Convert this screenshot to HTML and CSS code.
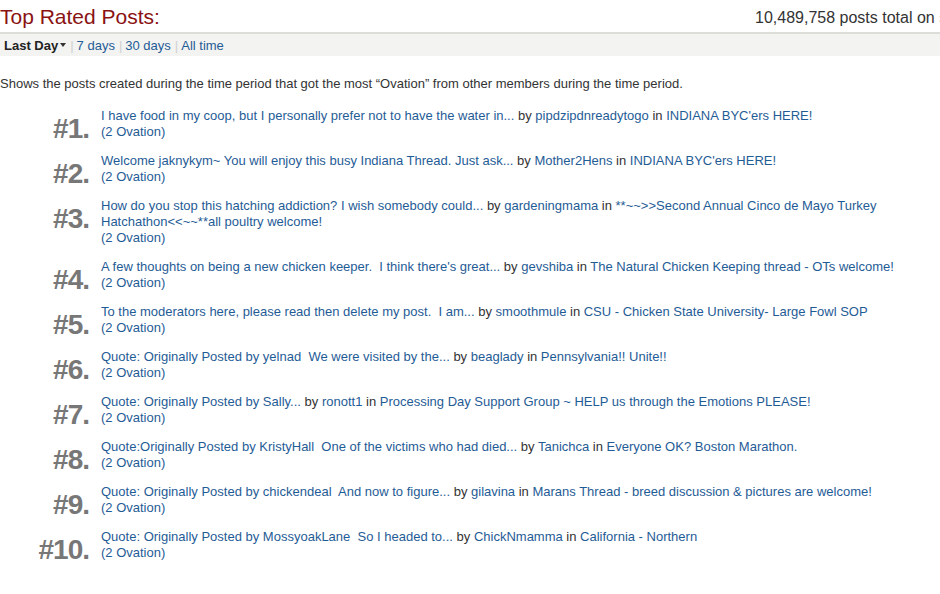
FILE: index.html
```html
<!DOCTYPE html>
<html>
<head>
<meta charset="utf-8">
<link rel="stylesheet" href="styles.css">
</head>
<body>
<div class="page">
  <div class="header">
    <h1 class="title">Top Rated Posts:</h1>
    <div class="stats">10,489,758 posts total on site</div>
  </div>
  <div class="tabs">
    <span class="tab current">Last Day<span class="caret"></span></span>
    <span class="sep">|</span>
    <a class="tab" href="#">7 days</a>
    <span class="sep">|</span>
    <a class="tab" href="#">30 days</a>
    <span class="sep">|</span>
    <a class="tab" href="#">All time</a>
  </div>
  <p class="desc">Shows the posts created during the time period that got the most “Ovation” from other members during the time period.</p>
  <ol class="posts">
    <li class="post"><div class="rank">#1.</div><div class="body"><a href="#">I have food in my coop, but I personally prefer not to have the water in...</a> by <a href="#">pipdzipdnreadytogo</a> in <a href="#">INDIANA BYC'ers HERE!</a><br><span class="ov">(2 Ovation)</span></div></li>
    <li class="post"><div class="rank">#2.</div><div class="body"><a href="#">Welcome jaknykym~ You will enjoy this busy Indiana Thread. Just ask...</a> by <a href="#">Mother2Hens</a> in <a href="#">INDIANA BYC'ers HERE!</a><br><span class="ov">(2 Ovation)</span></div></li>
    <li class="post"><div class="rank">#3.</div><div class="body"><a href="#">How do you stop this hatching addiction? I wish somebody could...</a> by <a href="#">gardeningmama</a> in <a href="#">**~~&gt;&gt;Second Annual Cinco de Mayo Turkey Hatchathon&lt;&lt;~~**all poultry welcome!</a><br><span class="ov">(2 Ovation)</span></div></li>
    <li class="post"><div class="rank">#4.</div><div class="body"><a href="#">A few thoughts on being a new chicken keeper.&nbsp; I think there's great...</a> by <a href="#">gevshiba</a> in <a href="#">The Natural Chicken Keeping thread - OTs welcome!</a><br><span class="ov">(2 Ovation)</span></div></li>
    <li class="post"><div class="rank">#5.</div><div class="body"><a href="#">To the moderators here, please read then delete my post.&nbsp; I am...</a> by <a href="#">smoothmule</a> in <a href="#">CSU - Chicken State University- Large Fowl SOP</a><br><span class="ov">(2 Ovation)</span></div></li>
    <li class="post"><div class="rank">#6.</div><div class="body"><a href="#">Quote: Originally Posted by yelnad&nbsp; We were visited by the...</a> by <a href="#">beaglady</a> in <a href="#">Pennsylvania!! Unite!!</a><br><span class="ov">(2 Ovation)</span></div></li>
    <li class="post"><div class="rank">#7.</div><div class="body"><a href="#">Quote: Originally Posted by Sally...</a> by <a href="#">ronott1</a> in <a href="#">Processing Day Support Group ~ HELP us through the Emotions PLEASE!</a><br><span class="ov">(2 Ovation)</span></div></li>
    <li class="post"><div class="rank">#8.</div><div class="body"><a href="#">Quote:Originally Posted by KristyHall&nbsp; One of the victims who had died...</a> by <a href="#">Tanichca</a> in <a href="#">Everyone OK? Boston Marathon.</a><br><span class="ov">(2 Ovation)</span></div></li>
    <li class="post"><div class="rank">#9.</div><div class="body"><a href="#">Quote: Originally Posted by chickendeal&nbsp; And now to figure...</a> by <a href="#">gilavina</a> in <a href="#">Marans Thread - breed discussion &amp; pictures are welcome!</a><br><span class="ov">(2 Ovation)</span></div></li>
    <li class="post"><div class="rank">#10.</div><div class="body"><a href="#">Quote: Originally Posted by MossyoakLane&nbsp; So I headed to...</a> by <a href="#">ChickNmamma</a> in <a href="#">California - Northern</a><br><span class="ov">(2 Ovation)</span></div></li>
  </ol>
</div>
</body>
</html>
```
FILE: styles.css
```css
html, body {
  margin: 0;
  padding: 0;
  background: #fff;
  overflow: hidden;
}
body {
  font-family: "Liberation Sans", Arial, sans-serif;
  color: #333;
  width: 940px;
}
.page {
  width: 940px;
}
.header {
  display: grid;
  grid-template-columns: 755px auto;
  align-items: end;
  height: 32px;
  overflow: hidden;
}
.title {
  margin: 0;
  font-size: 21px;
  font-weight: normal;
  color: #8a1212;
  line-height: 24px;
  padding-bottom: 3px;
}
.stats {
  font-size: 16px;
  color: #333;
  white-space: nowrap;
  line-height: 20px;
  padding-bottom: 4px;
}
.tabs {
  border-top: 2px solid #dcdcd8;
  background: #f3f3f1;
  height: 22px;
  display: flex;
  align-items: center;
  padding-left: 4px;
  font-size: 13px;
}
.tab {
  color: #1f5c96;
  text-decoration: none;
}
.tab.current {
  color: #222;
  font-weight: bold;
  display: inline-flex;
  align-items: center;
}
.caret {
  display: inline-block;
  width: 0;
  height: 0;
  margin-left: 2px;
  border-left: 3px solid transparent;
  border-right: 3px solid transparent;
  border-top: 4px solid #333;
}
.sep {
  color: #d0d0d0;
  margin: 0 3px 0 4px;
}
.desc {
  margin: 20px 0 0;
  font-size: 13px;
  line-height: 16px;
  color: #333;
}
.posts {
  list-style: none;
  margin: 16px 0 0;
  padding: 0;
}
.post {
  display: flex;
  gap: 12px;
  margin-bottom: 13px;
}
.rank {
  width: 89px;
  flex: none;
  text-align: right;
  font-size: 28px;
  font-weight: bold;
  letter-spacing: -1px;
  line-height: 24px;
  height: 23px;
  padding-top: 9px;
  color: #777;
}
.body {
  flex: 1;
  font-size: 13px;
  line-height: 16px;
  color: #333;
}
.body a {
  color: #1f5c96;
  text-decoration: none;
}
.ov {
  color: #1f5c96;
}
```
